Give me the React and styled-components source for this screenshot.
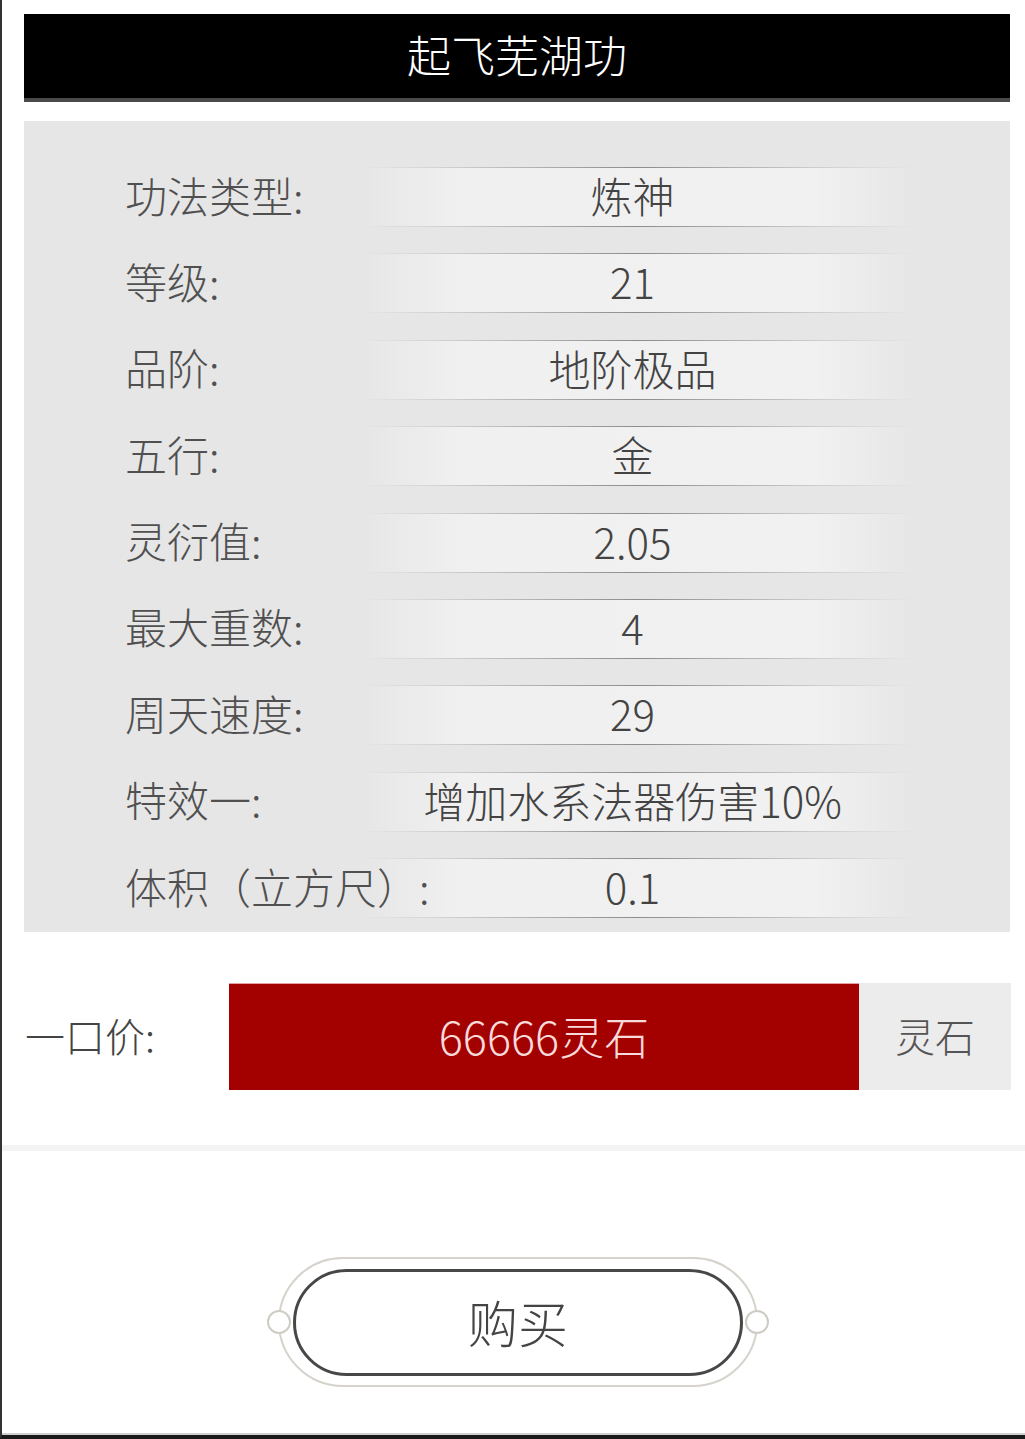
import React from 'react';
import styled, { createGlobalStyle } from 'styled-components';

const GlobalStyle = createGlobalStyle`
  html, body {
    margin: 0;
    padding: 0;
    background: #fff;
  }
  body {
    font-family: "Noto Sans CJK SC", "Noto Sans", sans-serif;
  }
`;

const Page = styled.div`
  box-sizing: border-box;
  width: 1025px;
  min-height: 1439px;
  padding-top: 14px;
  border-left: 2px solid #333;
  border-bottom: 4px solid #1a1a1a;
  box-shadow: inset 0 -2px 0 #d0d0d0;
  display: flex;
  flex-direction: column;
`;

const Header = styled.div`
  box-sizing: border-box;
  height: 88px;
  margin: 0 15px 0 22px;
  padding-bottom: 4px;
  background: #000;
  border-bottom: 4px solid #4a4a4a;
  display: flex;
  align-items: center;
  justify-content: center;
  color: #fff;
  font-size: 44px;
  font-weight: 300;
`;

const Panel = styled.div`
  margin: 19px 15px 0 22px;
  padding: 46px 95px 14px 101px;
  background: #e6e6e6;
  display: flex;
  flex-direction: column;
  gap: 26.4px;
`;

const Row = styled.div`
  display: grid;
  grid-template-columns: 235px 1fr;
  align-items: center;
  height: 60px;
`;

const Label = styled.div`
  position: relative;
  z-index: 1;
  padding-bottom: 5px;
  font-size: 42px;
  font-weight: 300;
  color: #505050;
  white-space: nowrap;
  line-height: 1;
`;

const Value = styled.div`
  box-sizing: border-box;
  height: 60px;
  display: flex;
  align-items: center;
  justify-content: center;
  padding: 0 10px 5px 0;
  font-size: 42px;
  font-weight: 300;
  color: #434343;
  background: linear-gradient(
    90deg,
    rgba(240, 240, 240, 0) 0%,
    #f0f0f0 18%,
    #f1f1f1 82%,
    rgba(240, 240, 240, 0) 100%
  );
  border-style: solid;
  border-width: 1px 0;
  border-image: linear-gradient(
      90deg,
      rgba(140, 140, 140, 0) 0%,
      #8c8c8c 50%,
      rgba(140, 140, 140, 0) 100%
    )
    1;
`;

const PriceRow = styled.div`
  margin: 51px 14px 0 23px;
  height: 107px;
  display: flex;
  align-items: stretch;
`;

const PriceLabel = styled.div`
  width: 204px;
  padding-bottom: 4px;
  display: flex;
  align-items: center;
  font-size: 40px;
  font-weight: 300;
  color: #444;
`;

const PriceBox = styled.div`
  width: 630px;
  padding-bottom: 4px;
  display: flex;
  align-items: center;
  justify-content: center;
  background: #a30000;
  border-top: 1px solid #e6a0a0;
  color: #f8dada;
  font-size: 45px;
  font-weight: 300;
`;

const UnitBox = styled.div`
  flex: 1;
  padding-bottom: 4px;
  display: flex;
  align-items: center;
  justify-content: center;
  background: #ececec;
  color: #555;
  font-size: 40px;
  font-weight: 300;
`;

const Divider = styled.div`
  margin-top: 55px;
  height: 6px;
  background: #f3f3f3;
`;

const ButtonWrap = styled.div`
  margin-top: 106px;
  display: flex;
  justify-content: center;
  padding-left: 9px;
`;

const OuterPill = styled.div`
  position: relative;
  box-sizing: border-box;
  width: 480px;
  height: 130px;
  border: 2px solid #d6d2cc;
  border-radius: 65px;
  display: flex;
  align-items: center;
  justify-content: center;
`;

const Knob = styled.span`
  position: absolute;
  top: 50%;
  ${({ side }) => (side === 'left' ? 'left: -13px;' : 'right: -13px;')}
  width: 20px;
  height: 20px;
  margin-top: -12px;
  border: 2px solid #cfcbc5;
  border-radius: 50%;
  background: #fff;
`;

const InnerPill = styled.button`
  box-sizing: border-box;
  width: 450px;
  height: 107px;
  padding-bottom: 4px;
  border: 3px solid #474747;
  border-radius: 54px;
  background: #fff;
  color: #444;
  font-family: "Noto Sans CJK SC", "Noto Sans", sans-serif;
  font-size: 50px;
  font-weight: 300;
  cursor: pointer;
`;

const specs = [
  ['功法类型:', '炼神'],
  ['等级:', '21'],
  ['品阶:', '地阶极品'],
  ['五行:', '金'],
  ['灵衍值:', '2.05'],
  ['最大重数:', '4'],
  ['周天速度:', '29'],
  ['特效一:', '增加水系法器伤害10%'],
  ['体积（立方尺）:', '0.1'],
];

const App = () => (
  <Page>
    <GlobalStyle />
    <Header>起飞芜湖功</Header>
    <Panel>
      {specs.map(([label, value]) => (
        <Row key={label}>
          <Label>{label}</Label>
          <Value>{value}</Value>
        </Row>
      ))}
    </Panel>
    <PriceRow>
      <PriceLabel>一口价:</PriceLabel>
      <PriceBox>66666灵石</PriceBox>
      <UnitBox>灵石</UnitBox>
    </PriceRow>
    <Divider />
    <ButtonWrap>
      <OuterPill>
        <Knob side="left" />
        <InnerPill type="button">购买</InnerPill>
        <Knob side="right" />
      </OuterPill>
    </ButtonWrap>
  </Page>
);

export default App;
